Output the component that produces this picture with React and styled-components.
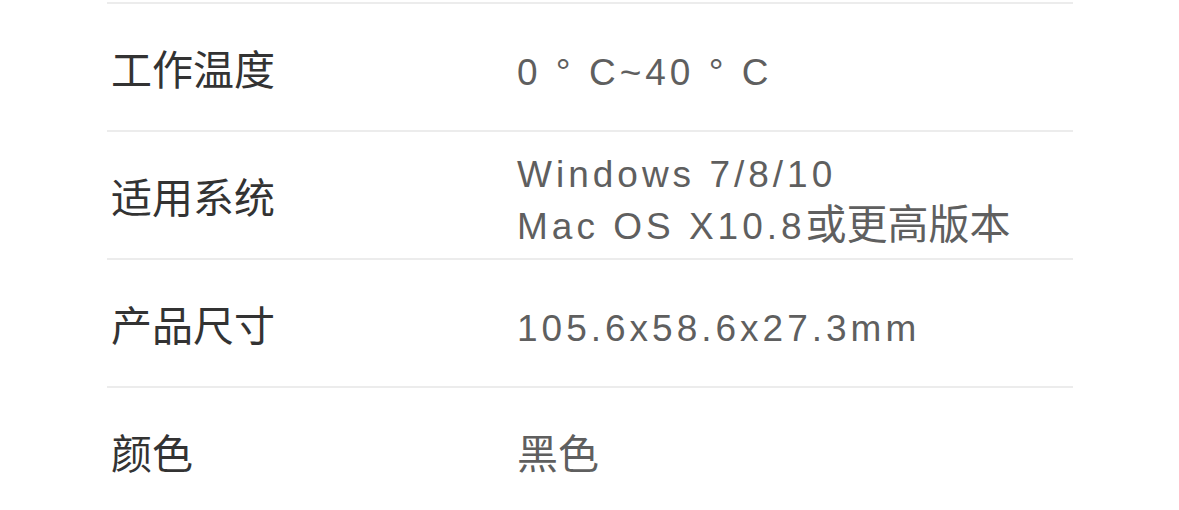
import React from "react";
import styled, { createGlobalStyle } from "styled-components";

const GlobalStyle = createGlobalStyle`
  body {
    margin: 0;
    background: #ffffff;
    font-family: "Liberation Sans", "Noto Sans CJK SC", sans-serif;
  }
`;

const specs = [
  { label: "工作温度", value: [[{ latin: "0 ° C~40 ° C" }]] },
  {
    label: "适用系统",
    value: [
      [{ latin: "Windows 7/8/10" }],
      [{ latin: "Mac OS X10.8" }, { cjk: "或更高版本" }],
    ],
  },
  { label: "产品尺寸", value: [[{ latin: "105.6x58.6x27.3mm" }]] },
  { label: "颜色", value: [[{ cjk: "黑色" }]] },
];

const App = () => {
  return (
    <Page>
      <GlobalStyle />
      <SpecTable>
        {specs.map((spec) => (
          <SpecRow key={spec.label}>
            <Label>{spec.label}</Label>
            <Value>
              {spec.value.map((line, i) => (
                <Line key={i}>
                  {line.map((part, j) =>
                    part.latin ? (
                      <Latin key={j}>{part.latin}</Latin>
                    ) : (
                      <Cjk key={j}>{part.cjk}</Cjk>
                    )
                  )}
                </Line>
              ))}
            </Value>
          </SpecRow>
        ))}
      </SpecTable>
    </Page>
  );
};

const Page = styled.div`
  width: 1179px;
  height: 510px;
  overflow: hidden;
  background: #ffffff;
  padding-top: 2px;
  box-sizing: border-box;
`;

const SpecTable = styled.div`
  margin-left: 107px;
  width: 966px;
`;

const SpecRow = styled.div`
  display: grid;
  grid-template-columns: 410px 1fr;
  align-items: center;
  height: 128px;
  box-sizing: border-box;
  border-top: 2px solid #ececec;
`;

const Label = styled.div`
  padding-left: 4px;
  font-family: "Noto Sans CJK SC", sans-serif;
  font-size: 41px;
  color: #333333;
  line-height: 52px;
`;

const Value = styled.div`
  color: #5f5f5f;
  display: flex;
  flex-direction: column;
  font-family: "Noto Sans CJK SC", sans-serif;
  font-size: 41px;
`;

const Line = styled.div`
  line-height: 52px;
  white-space: nowrap;
`;

const Latin = styled.span`
  font-family: "Liberation Sans", sans-serif;
  font-size: 37px;
  line-height: 1;
  letter-spacing: 4px;
`;

const Cjk = styled.span`
  font-family: "Noto Sans CJK SC", sans-serif;
  font-size: 41px;
  line-height: 1;
`;

export default App;
